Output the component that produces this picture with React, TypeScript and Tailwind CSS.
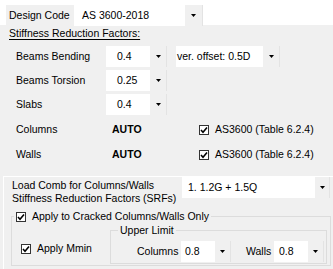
import React from "react"

function Arrow() {
  return (
    <svg width="5" height="3" viewBox="0 0 5 3">
      <path d="M0 0h5L2.5 3z" fill="#000" />
    </svg>
  )
}

function Combo({
  text,
  width,
  pad,
  btn = "w-[16px]",
}: {
  text: string
  width: string
  pad: string
  btn?: string
}) {
  return (
    <div className={`flex h-[21px] bg-white border-r border-[#e3e3e3] ${width}`}>
      <span className={`flex-1 flex items-center whitespace-nowrap overflow-hidden ${pad}`}>{text}</span>
      <span className={`flex items-center justify-center bg-[#f0f0f0] ${btn}`}>
        <Arrow />
      </span>
    </div>
  )
}

function Check() {
  return (
    <span className="w-[10px] h-[10px] border border-[#333] bg-white flex items-center justify-center shrink-0">
      <svg width="8" height="8" viewBox="0 0 8 8" fill="none">
        <path d="M1 4l2 2.2L7 1.5" stroke="#000" strokeWidth="1.6" />
      </svg>
    </span>
  )
}

export default function App() {
  return (
    <div className="w-[333px] h-[269px] overflow-hidden bg-[#f0f0f0] text-black text-[10.5px] leading-[13px] whitespace-nowrap font-['Liberation_Sans',Arial,sans-serif]">
      {/* design code strip */}
      <div className="h-[25px] bg-white flex pt-[5px]">
        <div className="ml-[6px] w-[68px] bg-[#f0f0f0] flex items-center pl-[3px]">Design Code</div>
        <Combo text="AS 3600-2018" width="w-[129px] h-[20px]" pad="pl-[8px]" btn="w-[17px]" />
      </div>

      <div className="mt-[2px] pl-[9px] underline underline-offset-2">Stiffness Reduction Factors:</div>

      <div className="flex flex-col gap-[3px] mt-[6px]">
        <div className="flex items-center h-[21px]">
          <span className="w-[106px] pl-[16px]">Beams Bending</span>
          <Combo text="0.4" width="w-[61px]" pad="pl-[11px]" />
          <span className="ml-[9px]">
            <Combo text="ver. offset: 0.5D" width="w-[104px]" pad="pl-[1px]" />
          </span>
        </div>
        <div className="flex items-center h-[21px]">
          <span className="w-[106px] pl-[16px]">Beams Torsion</span>
          <Combo text="0.25" width="w-[61px]" pad="pl-[11px]" />
        </div>
        <div className="flex items-center h-[21px]">
          <span className="w-[106px] pl-[16px]">Slabs</span>
          <Combo text="0.4" width="w-[61px]" pad="pl-[11px]" />
        </div>
      </div>

      <div className="mt-[2px]">
        {["Columns", "Walls"].map((name) => (
          <div key={name} className="flex items-center h-[25px]">
            <span className="w-[112px] pl-[16px]">{name}</span>
            <span className="w-[87px] font-bold">AUTO</span>
            <Check />
            <span className="ml-[6px]">AS3600 (Table 6.2.4)</span>
          </div>
        ))}
      </div>

      {/* load comb panel */}
      <div className="mt-[9px] ml-[3px] h-[95px] border-t border-l border-white">
        <div className="flex">
          <div className="w-[178px] pl-[8px] mt-[2px]">
            <div>Load Comb for Columns/Walls</div>
            <div>Stiffness Reduction Factors (SRFs)</div>
          </div>
          <Combo text="1. 1.2G + 1.5Q" width="w-[148px]" pad="pl-[6px]" btn="w-[14px]" />
        </div>

        <fieldset className="mt-[5px] ml-[7px] w-[320px] border border-[#dcdcdc] pb-[1px]">
          <legend className="ml-[2px] px-[2px]">
            <div className="flex items-center gap-[6px]">
              <Check />
              <span>Apply to Cracked Columns/Walls Only</span>
            </div>
          </legend>
          <div className="flex">
            <div className="w-[98px] pl-[9px] flex items-center gap-[6px] pt-[10px]">
              <Check />
              <span>Apply Mmin</span>
            </div>
            <fieldset className="mt-[1px] w-[217px] border border-[#dcdcdc] pb-[1px]">
              <legend className="ml-[7px] px-[2px]">Upper Limit</legend>
              <div className="flex items-center mt-[4px] pl-[26px]">
                <span className="w-[44px]">Columns</span>
                <Combo text="0.8" width="w-[50px]" pad="pl-[4px]" btn="w-[15px]" />
                <span className="ml-[15px] w-[28px]">Walls</span>
                <Combo text="0.8" width="w-[50px]" pad="pl-[5px]" btn="w-[15px]" />
              </div>
            </fieldset>
          </div>
        </fieldset>
      </div>
    </div>
  )
}
